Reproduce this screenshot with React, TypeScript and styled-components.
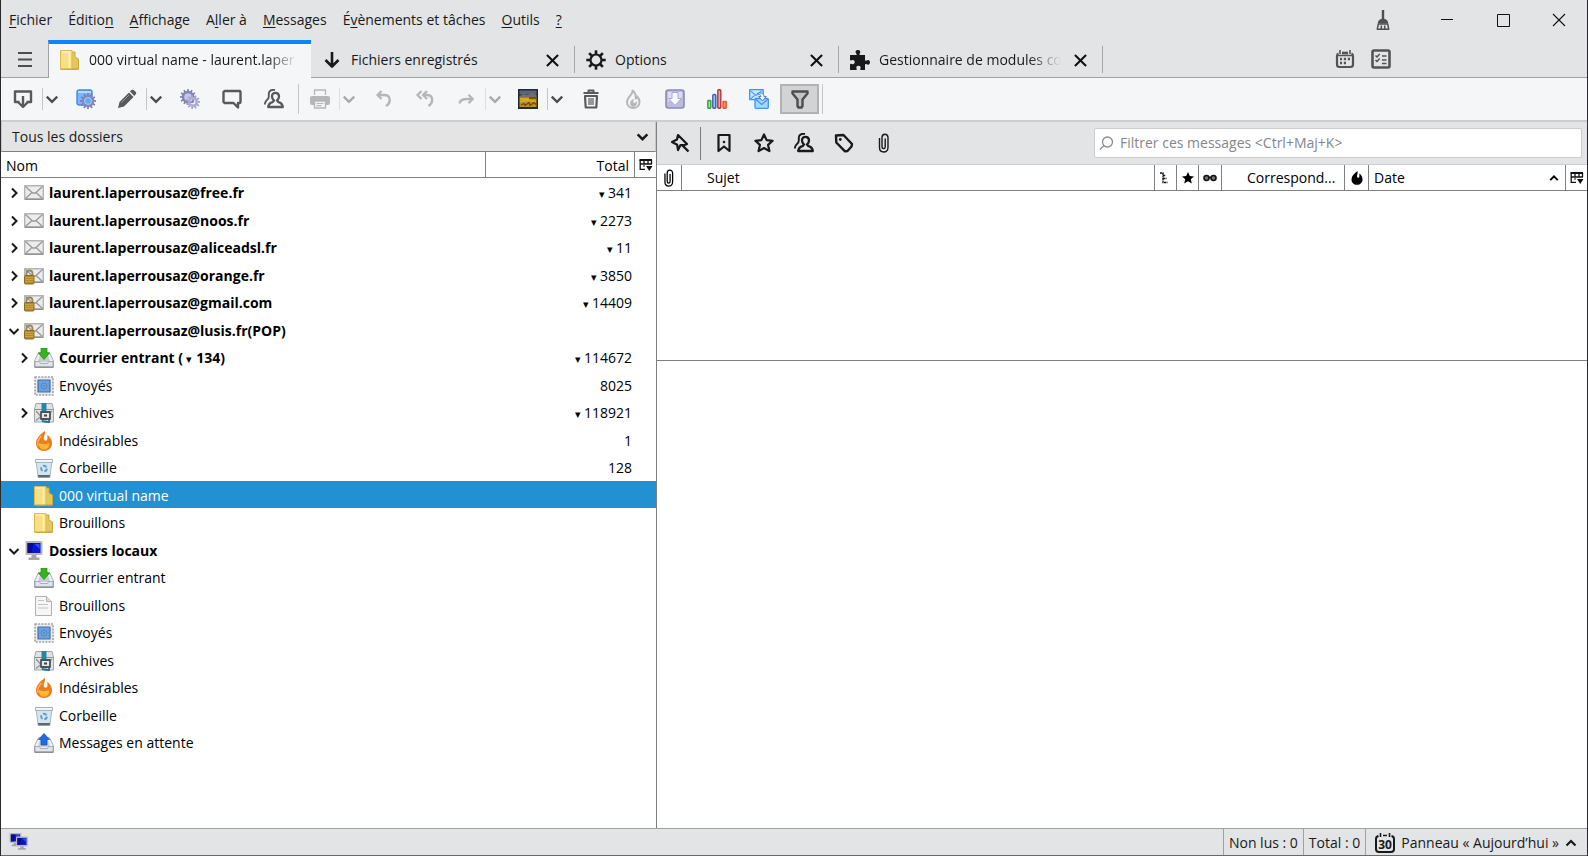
import React from "react";
import styled, { createGlobalStyle, css } from "styled-components";

const GlobalStyle = createGlobalStyle`
  *, *::before, *::after { box-sizing: border-box; }
  body { margin: 0; }
  body, button, input {
    font-family: "Open Sans", "Noto Sans", sans-serif;
    font-size: 14px;
    line-height: 20px;
    color: #18191a;
  }
  button { margin: 0; padding: 0; border: 0; background: none; }
  svg { display: block; flex: none; }
`;

/* ---------- window frame ---------- */

const Window = styled.div`
  display: flex;
  flex-direction: column;
  min-height: 100vh;
  overflow: hidden;
  background: #fff;
  border: solid #2a2a2e;
  border-width: 0 1px;
`;

const TitleBar = styled.header`
  display: flex;
  align-items: center;
  height: 40px;
  background: #e3e4e6;
`;

const MenuBar = styled.nav`
  display: flex;
  gap: 16px;
  padding-left: 8px;
`;

const MenuButton = styled.button`
  white-space: nowrap;
  text-underline-offset: 2px;
`;

const WindowControls = styled.div`
  display: flex;
  margin-left: auto;
`;

const WindowButton = styled.button<{ $wide?: boolean }>`
  display: flex;
  align-items: center;
  justify-content: center;
  width: ${(p) => (p.$wide ? 72 : 56)}px;
  height: 36px;
`;

/* ---------- tabs ---------- */

const TabBar = styled.div`
  display: flex;
  height: 38px;
  background: #e3e4e6;
  box-shadow: inset 0 -1px #a0a1a3;
`;

const AppMenuButton = styled.button`
  display: flex;
  align-items: center;
  justify-content: center;
  width: 47px;
`;

const TabItem = styled.div<{ $active?: boolean }>`
  display: flex;
  align-items: center;
  gap: 9px;
  position: relative;
  width: ${(p) => (p.$active ? 263 : 264)}px;
  padding: 2px 13px 0 11px;
  ${(p) =>
    p.$active
      ? css`
          background: #f5f6f7;
          border-top: 4px solid #0a84ff;
          border-left: 1px solid #a0a1a3;
          padding-top: 0;
          padding-bottom: 2px;
        `
      : css`
          &::after {
            content: "";
            position: absolute;
            right: 0;
            top: 6px;
            bottom: 5px;
            border-right: 1px solid #a6a7a9;
          }
        `}
`;

const TabLabel = styled.button<{ $fade?: boolean }>`
  flex: 1;
  min-width: 0;
  overflow: hidden;
  text-align: left;
  white-space: nowrap;
  ${(p) => p.$fade && css`mask-image: linear-gradient(to left, transparent, #000 32px);`}
`;

const CloseButton = styled.button`
  display: flex;
  justify-content: center;
  width: 20px;
`;

const TabTools = styled.div`
  display: flex;
  gap: 16px;
  align-items: center;
  margin-left: auto;
  padding-right: 196px;
`;

/* ---------- main toolbar ---------- */

const Toolbar = styled.div`
  display: flex;
  align-items: center;
  height: 44px;
  padding-left: 2px;
  background: #f5f6f7;
  border-bottom: 2px solid #cccdcf;
`;

const ToolButton = styled.button<{ $split?: boolean; $dim?: boolean }>`
  display: flex;
  align-items: center;
  justify-content: center;
  width: ${(p) => (p.$split ? 40 : 42)}px;
  height: 30px;
  color: #58595b;
  opacity: ${(p) => (p.$dim ? 0.4 : 1)};
`;

const DropButton = styled.button<{ $dim?: boolean }>`
  display: flex;
  align-items: center;
  width: 22px;
  height: 22px;
  margin-left: -1px;
  margin-right: 1px;
  padding-left: 2px;
  color: #4c4d4f;
  border-left: 1px solid #c4c5c7;
  opacity: ${(p) => (p.$dim ? 0.45 : 1)};
`;

const PressedButton = styled.button`
  display: flex;
  align-items: center;
  justify-content: center;
  width: 39px;
  height: 30px;
  margin-right: 3px;
  color: #4c4d4f;
  background: #d2d3d4;
  border: 2px solid #b1b2b4;
`;

const Divider = styled.span<{ $dark?: boolean }>`
  width: 1px;
  height: ${(p) => (p.$dark ? 33 : 30)}px;
  margin-right: ${(p) => (p.$dark ? 3 : 1)}px;
  background: ${(p) => (p.$dark ? "#7b7c7e" : "#c4c5c7")};
`;

const ToolGroup = styled.div`
  display: flex;
  align-items: center;
  padding-right: 3px;
`;

/* ---------- panes ---------- */

const Panes = styled.main`
  display: grid;
  grid-template-columns: 656px minmax(0, 1fr);
  flex: 1;
`;

const FolderPane = styled.section`
  border-right: 1px solid #7f8082;
`;

const FolderMode = styled.button`
  display: flex;
  align-items: center;
  justify-content: space-between;
  width: 100%;
  height: 30px;
  padding: 0 6px 0 10px;
  background: #e4e4e4;
  border: solid #c8c8c8;
  border-width: 0 1px 1px;
  border-bottom-color: #808080;
`;

const Table = styled.table`
  width: 100%;
  table-layout: fixed;
  border-collapse: separate;
  border-spacing: 0;
  color: #000;
`;

const HeadCell = styled.th<{ $pad?: string; $align?: string; $last?: boolean }>`
  height: 26px;
  padding: ${(p) => p.$pad || "0"};
  font-weight: 400;
  text-align: ${(p) => p.$align || "left"};
  white-space: nowrap;
  border-bottom: 1px solid #808080;
  border-right: ${(p) => (p.$last ? "0" : "1px solid #808080")};

  svg { margin: 0 auto; }
`;

const DateHead = styled.div`
  display: flex;
  align-items: center;
  justify-content: space-between;

  svg { margin: 0; }
`;

const FolderRow = styled.tr<{ $selected?: boolean }>`
  height: 28px;
  &:nth-child(even) { height: 27px; }
  ${(p) => p.$selected && css`background: #2391d1; color: #fff;`}
`;

const FolderCell = styled.td`
  padding: 0;
`;

const FolderLine = styled.div<{ $nested?: boolean; $bold?: boolean }>`
  display: flex;
  align-items: center;
  gap: 5px;
  height: 27px;
  padding-top: 2px;
  padding-left: ${(p) => (p.$nested ? 15 : 5)}px;
  font-weight: ${(p) => (p.$bold ? 700 : 400)};
  white-space: nowrap;
`;

const Twisty = styled.button`
  display: flex;
  align-items: center;
  justify-content: center;
  width: 16px;
  height: 20px;
  margin-right: -3px;
`;

const TwistySpace = styled.span`
  width: 13px;
`;

const CountCell = styled.td`
  padding: 2px 3px 0 0;
  text-align: right;
  white-space: nowrap;
`;

const Down = styled.span<{ $spaced?: boolean }>`
  margin: ${(p) => (p.$spaced ? "0 1px 0 3px" : "0")};
  font-family: "DejaVu Sans", sans-serif;
  font-size: 11px;
  line-height: 14px;
`;

const MessagePane = styled.section`
  display: flex;
  flex-direction: column;
`;

const FilterBar = styled.form`
  display: flex;
  align-items: center;
  height: 43px;
  padding: 0 5px 0 3px;
  background: #e3e4e6;
  border-bottom: 1px solid #cccdcf;
`;

const FilterButton = styled.button`
  display: flex;
  align-items: center;
  justify-content: center;
  width: 40px;
  height: 30px;
`;

const SearchBox = styled.label`
  display: flex;
  align-items: center;
  gap: 6px;
  flex: 0 1 488px;
  height: 30px;
  margin-left: auto;
  padding-left: 4px;
  background: #fff;
  border: 1px solid #cccdcf;
  border-radius: 2px;
`;

const SearchInput = styled.input`
  flex: 1;
  min-width: 0;
  padding: 0;
  border: 0;
  outline: 0;
  background: none;
  &::placeholder { color: #85868a; opacity: 1; }
`;

const ThreadArea = styled.div`
  height: 196px;
  border-bottom: 1px solid #7f8082;
`;

/* ---------- status bar ---------- */

const StatusBar = styled.footer`
  display: flex;
  height: 28px;
  background: #e3e4e6;
  border-top: 1px solid #9fa0a2;
  border-bottom: 1px solid #68696b;
`;

const OnlineButton = styled.button`
  padding: 0 8px;
  margin-right: auto;
`;

const StatusText = styled.span`
  padding: 4px 5px 2px;
  border-left: 1px solid #a0a1a3;
`;

const TodayButton = styled.button`
  display: flex;
  align-items: center;
  gap: 6px;
  padding: 1px 10px 0 9px;
  border-left: 1px solid #a0a1a3;
`;

/* ---------- icons ---------- */

const Chevron = ({ dir = "down", size = 12, w = 2 }: { dir?: "down" | "right" | "up"; size?: number; w?: number }) => (
  <svg width={size} height={size} viewBox="0 0 12 12" fill="none" stroke="currentColor" strokeWidth={w}>
    <path d={{ down: "M1.500 4l4.500 4.500L10.500 4", right: "M4 1.500L8.500 6 4 10.500", up: "M1.500 8.500L6 4l4.500 4.500" }[dir]} />
  </svg>
);

const Cross = ({ size, w }: { size: number; w: number }) => (
  <svg width={size} height={size} viewBox="0 0 14 14" stroke="#111" strokeWidth={w} fill="none">
    <path d="M1 1l12 12M13 1L1 13" />
  </svg>
);

const Icon = ({ children, size = 20 }: { children: React.ReactNode; size?: number }) => (
  <svg width={size} height={size} viewBox="0 0 20 20" fill="none" stroke="currentColor" strokeWidth="2" strokeLinejoin="round">
    {children}
  </svg>
);

const Broom = () => (
  <Icon>
    <path d="M10 0v9" stroke="#4e4f51" strokeWidth="2.400" />
    <path d="M4.800 13.500c0-3 2.200-4.800 5.200-4.800s5.200 1.800 5.200 4.800z" fill="#4e4f51" stroke="none" />
    <path d="M5.300 14L4.300 19.200h11.400L14.700 14zM8.300 15.500v4M11.700 15.500v4" stroke="#4e4f51" strokeWidth="1.500" />
  </Icon>
);

const gearTeeth = (cx: number, cy: number, r1: number, r2: number, n: number, color: string, w: number) =>
  Array.from({ length: n }, (_, i) => {
    const a = (i * 2 * Math.PI) / n;
    return (
      <line
        key={i}
        x1={cx + r1 * Math.cos(a)}
        y1={cy + r1 * Math.sin(a)}
        x2={cx + r2 * Math.cos(a)}
        y2={cy + r2 * Math.sin(a)}
        stroke={color}
        strokeWidth={w}
      />
    );
  });

const OptionsGear = () => (
  <Icon>
    <circle cx="10" cy="10" r="5.500" strokeWidth="2.200" />
    {gearTeeth(10, 10, 6, 9.700, 8, "currentColor", 2.600)}
  </Icon>
);

const Puzzle = () => (
  <Icon>
    <path
      d="M0 5h6c1 0 .8-1 .2-1.600C4.800 1.500 6 0 8 0s3 1.500 1.800 3.400C9.200 4.200 9.400 5 10.200 5H15v5c0 .8.800 1 1.500.5C18.300 9.300 20 10.300 20 12.300s-1.600 3-3.400 1.900c-.8-.5-1.600-.2-1.600.6V20h-4c-1 0-.9-1-.5-1.800.6-1.500-.4-2.400-2-2.400s-2.700.9-2 2.400c.4.900.4 1.800-.5 1.800H0v-5.500c0-.9 1-.9 1.700-.5 1.500.8 3-.1 3-1.900s-1.500-2.700-3-1.900C.9 10.600 0 10.500 0 9.700z"
      fill="currentColor"
      stroke="none"
    />
  </Icon>
);

const DownArrow = () => (
  <Icon>
    <path d="M10 2v14M3.500 10l6.500 6.500 6.500-6.500" strokeWidth="2.600" />
  </Icon>
);

const CalendarIcon = () => (
  <Icon>
    <path d="M3.500 4.500Q2 5 2 7v8.500Q2 18 4.500 18h11q2.500 0 2.500-2.500V7q0-2-1.500-2.500" stroke="#525355" strokeWidth="2.200" />
    <path d="M3 6.500h14" stroke="#525355" strokeWidth="1.500" />
    <path d="M5 1v4M15 1v4" stroke="#525355" strokeWidth="1.600" />
    <path d="M7 4h6" stroke="#525355" strokeWidth="2.600" />
    <path d="M8.800 10h2.200M12.800 10H15M5 10h2M5 14h2M8.800 14h2.200" stroke="#525355" strokeWidth="2.400" />
  </Icon>
);

const TasksIcon = () => (
  <Icon>
    <rect x="1.500" y="1.500" width="17" height="17" rx="1.500" stroke="#525355" strokeWidth="2.600" />
    <path d="M4.500 6.500L6 8l2.700-3M4.500 11L6 12.500 8.700 9.500M11 7h4.500M11 11h4.500M11 14.500h4.500" stroke="#525355" strokeWidth="1.500" />
  </Icon>
);

const PeopleIcon = () => (
  <Icon>
    <path d="M8.500 13.200l1.500-1.700C8.500 10.300 8 9 8 7.500c0-2.400 1.300-3.700 3.500-3.700S15 5.100 15 7.500c0 1.500-.5 2.800-2 4l1.500 1.700c2.600.7 4 2.300 4.300 4.800H4.200c.3-2.500 1.700-4.100 4.300-4.800z" strokeWidth="2.300" />
    <path d="M11 1C8 .3 5 1.500 4.800 4.500v3c0 1.700-.6 2.600-1.800 3.400C1.500 12 1 13.500 .8 15.500" strokeWidth="1.900" />
  </Icon>
);

const FolderIcon = () => (
  <Icon>
    <path d="M10 2h5v5l3.500 2v10H6z" fill="#e3c65c" stroke="#c9a83e" strokeWidth="1" />
    <path d="M.5 .500h11.500v18.500H.5z" fill="#f6df87" stroke="#dcbb4e" strokeWidth="1" />
    <path d="M2 2h7.500v16" stroke="#fdf3b8" strokeWidth="1.500" />
    <path d="M.5 19.300h18" stroke="#c79f38" strokeWidth="1" />
  </Icon>
);

const MailIcon = ({ lock }: { lock?: boolean }) => (
  <Icon>
    <rect x=".7" y="2.700" width="18.600" height="13.600" fill="#ececed" stroke="#b4b4b6" strokeWidth="1.400" />
    <path d="M1 16.200h18" stroke="#8e8e90" strokeWidth="1.400" />
    <path d="M1.500 3.500l7 6.500h3l7-6.500M1.500 15.500l6-5.500M18.500 15.500l-6-5.500" stroke="#98999b" strokeWidth="1.300" />
    {lock && (
      <>
        <path d="M2.500 10V7.500C2.500 3.500 8.500 3.500 8.500 7.500V10" stroke="#9b8659" strokeWidth="1.800" />
        <rect x=".5" y="9.500" width="9.500" height="8.500" rx="1" fill="#b18a2c" stroke="#8c6a1d" strokeWidth="1" />
        <path d="M1 11.500h8.500M1 13.500h8.500M1 15.500h8.500" stroke="#d0a94a" strokeWidth=".8" />
      </>
    )}
  </Icon>
);

const TrayIcon = ({ out }: { out?: boolean }) => (
  <Icon>
    <path d="M4.500 4.500h11L19.500 13v6H.5v-6z" fill="#eceff3" stroke="#a9adb2" strokeWidth="1" />
    <path d="M6 7h8l2 7H4z" fill="#c6ccd3" stroke="none" />
    <path d="M1 13.500h4.500l1 2h7l1-2H19V19H1z" fill="#dfe4ea" stroke="#9aa0a7" strokeWidth=".8" />
    <path d="M.5 19.200h19" stroke="#83888e" strokeWidth="1.200" />
    {out ? (
      <path d="M10 .500L15.500 6.500H13v5.500H7V6.500H4.500z" fill="#1f6bdf" stroke="#1450b4" strokeWidth=".7" />
    ) : (
      <path d="M7 0h6v5h2.700L10 11.500 4.300 5H7z" fill="#35b51c" stroke="#1f8b10" strokeWidth=".7" />
    )}
  </Icon>
);

const StampIcon = () => (
  <Icon>
    <rect x="1" y="1" width="18" height="18" fill="#ececec" stroke="#a0a1a2" strokeWidth="1.600" strokeDasharray="2 1.200" />
    <rect x="4" y="4" width="12" height="12" fill="#6ea0da" stroke="#3d70b5" strokeWidth="1.200" />
    <circle cx="10" cy="10" r="3" stroke="#5588ca" strokeWidth="1" />
    <circle cx="10" cy="10" r="1" fill="#5588ca" stroke="none" />
  </Icon>
);

const ArchiveIcon = () => (
  <Icon>
    <path d="M2 .500h16l1.500 5.500v13H.5V6z" fill="#e2e3e4" stroke="#a3a5a7" strokeWidth="1" />
    <path d="M1 6.500h18M2 8l5 5.500-5 4M18 8l-4 4" stroke="#8e9193" strokeWidth="1.200" />
    <path d="M7.500 0h5v18l-2-1.500-3 1z" fill="#2586a8" stroke="none" />
    <rect x="7" y="9" width="9" height="7" fill="#e8e8e8" stroke="#4d5358" strokeWidth="1.800" />
    <path d="M10 11.500h3v2h-3z" fill="#3d4347" stroke="none" />
    <path d="M8 18l7 1.500V17" stroke="#1f7596" strokeWidth="1.800" />
  </Icon>
);

const FireIcon = () => (
  <Icon>
    <path
      d="M11 0C7 2.500 2 7 2 12.500 2 17 5.500 20 10 20s8-3 8-7.500c0-3.500-1.500-6.500-4.500-8.500-.7 2 .8 4-.8 5.300-1.500 1-3-.2-3-2C9.700 5 11.700 3 11 0z"
      fill="#ee7c18"
      stroke="none"
    />
    <path d="M5 12c2 1.500 8 1.500 10 0 .5 4-1.500 6.500-5 6.500S4.500 16 5 12z" fill="#ffb938" stroke="none" />
    <path d="M7.500 5C4.500 8 3 11 4 15" stroke="#fbb468" strokeWidth="1.300" />
  </Icon>
);

const BinIcon = () => (
  <Icon>
    <path d="M2 2h16l-2 17H4z" fill="#d3e5ef" stroke="#a9bac5" strokeWidth="1" />
    <path d="M1.500 1.500h17v3h-17z" fill="#eef4f7" stroke="#a6b2ba" strokeWidth="1" />
    <path d="M4 17h12l-.4 2.500H4.400z" fill="#5c6870" stroke="none" />
    <circle cx="10" cy="10.500" r="2.800" stroke="#5f9cc9" strokeWidth="1.900" strokeDasharray="4 1.900" />
  </Icon>
);

const Monitor = ({ x, y, s }: { x: number; y: number; s: number }) => (
  <g transform={`translate(${x} ${y}) scale(${s})`} stroke="none">
    <rect x="0" y="0" width="17" height="14" rx="1" fill="#b8b9b6" />
    <rect x="2" y="2" width="13" height="10" fill="#0a16d0" />
    <path d="M2 2h6l-2 10H2z" fill="#0b0b92" />
    <path d="M9 3h5v5z" fill="#3550f0" />
    <path d="M6 14h5v2.500h3V19H3v-2.500h3z" fill="#a5a6a3" />
  </g>
);

const ComputerIcon = () => (
  <Icon>
    <Monitor x={1.500} y={0} s={1} />
  </Icon>
);

const PageIcon = () => (
  <Icon>
    <path d="M1.500 .500h11L17.500 5.500v14h-16z" fill="#f6f6f6" stroke="#aeb0b1" strokeWidth="1" />
    <path d="M12.500 .500v5h5" fill="#dcdddd" stroke="#aeb0b1" strokeWidth="1" />
    <path d="M4 4.500h6M4 8.500h10M4 12h10" stroke="#c3c4c5" strokeWidth="1" />
  </Icon>
);

const OnlineIcon = () => (
  <Icon>
    <Monitor x={0.500} y={1} s={0.700} />
    <Monitor x={7} y={4.500} s={0.700} />
  </Icon>
);

const PickerIcon = () => (
  <svg width="14" height="14" viewBox="0 0 14 14" fill="none" stroke="#111">
    <path d="M.5 2h12.500" strokeWidth="2" />
    <path d="M1.200 2v9.300H6M1 6h12M5 2v4M9 2v4M12.500 2v4" strokeWidth="1.300" />
    <path d="M5 7v2" strokeWidth="1" />
    <path d="M7 8h6.500L10.300 13z" fill="#111" stroke="none" />
  </svg>
);

const PaperClip = ({ size }: { size?: number }) => (
  <Icon size={size}>
    <path d="M5.500 5v9.500c0 6 8.500 6 8.500 0V4.500c0-4.300-6-4.300-6 0v9.300c0 2.400 3.200 2.400 3.200 0V5.500" strokeWidth="1.400" />
  </Icon>
);

/* ---------- toolbar drawings ---------- */

const GetMail = () => (
  <Icon>
    <path d="M6.500 13H2V2.500h16V13h-4.500" strokeWidth="2.400" />
    <path d="M10 7v11M5.500 13.500L10 18l4.500-4.500" strokeWidth="2.400" />
  </Icon>
);

const AddressGear = () => (
  <Icon>
    <rect x="1" y="1" width="15" height="15" rx="2" fill="#77b7fb" stroke="#3b8cf0" strokeWidth="1.400" />
    <path d="M2 3h13" stroke="#cfe5ff" strokeWidth="1.500" />
    {gearTeeth(12, 12, 5, 8, 12, "#7d80b0", 1.800)}
    <circle cx="12" cy="12" r="5" fill="#7dbafa" stroke="#8487b8" strokeWidth="2.400" />
    <circle cx="12" cy="12" r="3.400" fill="#63a6f5" stroke="#b6d6fb" strokeWidth=".8" />
  </Icon>
);

const Pencil = () => (
  <Icon>
    <path d="M1 19l1.500-6L12 3.500 16.500 8 7 17.500zM13 2.500l1.500-1.400c1-.8 1.900-.5 2.700.3l1.400 1.400c.8.800.9 1.700.1 2.500L17.400 7z" fill="currentColor" stroke="none" />
    <path d="M4.500 13.500l7.500-7.500" stroke="#9a9b9d" strokeWidth="1" />
  </Icon>
);

const TwoGears = () => (
  <Icon>
    {gearTeeth(8, 8, 5, 8, 12, "#7e80ae", 1.700)}
    <circle cx="8" cy="8" r="5" fill="#c5c6e0" stroke="#8284b2" strokeWidth="2.400" />
    {gearTeeth(13, 13, 4, 7, 11, "#a09fce", 1.700)}
    <circle cx="13" cy="13" r="3.700" fill="#eeeef8" stroke="#aeadd8" strokeWidth="2.600" />
    <path d="M13 10.500v2.500h-2.500" stroke="#6f7098" strokeWidth="1.500" />
  </Icon>
);

const Chat = () => (
  <Icon>
    <path d="M2.500 2h15.500l.5 1V13l-.5 1h-2v4.500L11.500 14H2.500l-1-1V3z" strokeWidth="2.400" />
  </Icon>
);

const Printer = () => (
  <Icon>
    <path d="M4.500 6V1h11v5" strokeWidth="1.300" />
    <rect x="0" y="7" width="20" height="9" rx="2" fill="currentColor" stroke="none" />
    <path d="M4.500 12h11v7h-11z" fill="#f5f6f7" strokeWidth="1.300" />
    <path d="M6.500 14.500h7M6.500 16.700h5" strokeWidth="1.200" />
  </Icon>
);

const Reply = ({ all }: { all?: boolean }) => (
  <Icon>
    {all ? (
      <path d="M6.500 2L2.500 6l4 4M12 2L8 6l4 4M8.500 6H12c6 0 7 7 1.500 11" strokeWidth="2.400" />
    ) : (
      <path d="M8.500 2L4.500 6l4 4M5 6h6c7 0 7.500 7.500 2 11" strokeWidth="2.400" />
    )}
  </Icon>
);

const Forward = () => (
  <Icon>
    <path d="M3.500 14.500C4 11 7 10 11 10h5M12.500 5.800L16.800 10l-4.300 4.200" strokeWidth="2.300" />
  </Icon>
);

const Picture = () => (
  <Icon>
    <rect x="0" y="0" width="20" height="20" fill="#242634" stroke="none" />
    <rect x="1.500" y="1.500" width="17" height="4" fill="#5c6580" stroke="none" />
    <path d="M1.500 7l4-2 4 1 5-2 4 2v3h-17z" fill="#75705f" stroke="none" />
    <rect x="1.500" y="8.500" width="17" height="9.500" fill="#c08f18" stroke="none" />
    <path d="M2 10h9M2 12.500c5-1 11-1 16 0" stroke="#e0b030" strokeWidth="1.300" />
    <path d="M3 16l3-1.500 1 2 4-3 1 3 4-3 2 2" stroke="#6a4c10" strokeWidth="1.300" />
    <path d="M11 9h7" stroke="#4e4118" strokeWidth="1.300" />
  </Icon>
);

const Trash = () => (
  <Icon>
    <path d="M2.500 4h15M7.500 3.500V1.500h5v2" />
    <path d="M4 7h12l-.7 11.500H4.700z" strokeWidth="2.200" />
    <path d="M8 9v7M10 9v7M12 9v7" strokeWidth="1.200" />
  </Icon>
);

const Flame = () => (
  <Icon>
    <path
      d="M9.500 1.500C10.500 5.500 4 7.500 4 13c0 3.600 2.600 6 6.200 6s6.300-2.400 6.300-6c0-2.300-.8-4-2.300-5.500-.2 1-.7 1.700-1.500 2 .4-3-.6-6-3.200-8z"
      strokeWidth="2"
    />
    <path d="M8 12c-1.500 3-.3 5.500 2.200 5.500s4-2 3.200-5c-1.200 1.800-2.200 2-2.900 1.500-.8-.6-.5-2 .2-3.500-1.200.3-2 .7-2.700 1.500z" fill="currentColor" strokeWidth=".6" />
  </Icon>
);

const DownloadBox = () => (
  <Icon>
    <rect x="1" y="1" width="18" height="18" rx="2.500" fill="#bdbce0" stroke="#8b8ab5" strokeWidth="1.600" />
    <path d="M3 3h14v6c-5-1-10 1-14 4z" fill="#dcdcf2" stroke="none" />
    <path d="M7 3.500h6v6h3.500L10 16.500 3.500 9.500H7z" fill="#f7f7fe" stroke="#aaa9cd" strokeWidth="1" />
  </Icon>
);

const Chart = () => (
  <Icon>
    <rect x=".8" y="11.500" width="3" height="7.700" rx=".6" fill="#a5dfa0" stroke="#33a33a" strokeWidth="1.400" />
    <rect x="5.800" y="5.500" width="3" height="13.700" rx="1" fill="#a9bfea" stroke="#3c5fae" strokeWidth="1.400" />
    <rect x="10.800" y=".8" width="3" height="18.400" rx="1" fill="#e2a7ac" stroke="#b3343f" strokeWidth="1.400" />
    <rect x="16" y="12.500" width="3.200" height="6.700" rx=".6" fill="#ff8d63" stroke="#ee5427" strokeWidth="1.400" />
  </Icon>
);

const Envelopes = () => (
  <Icon>
    <rect x=".7" y=".7" width="13.500" height="10" fill="#cbe6ff" stroke="#3b97f2" strokeWidth="1.300" />
    <path d="M1 1.500l6 5 6-5M1 10.500l4.500-4" stroke="#4fa3f5" strokeWidth="1.100" />
    <rect x="6" y="9.500" width="13.300" height="9.800" rx="1" fill="#a9d6ff" stroke="#3b97f2" strokeWidth="1.300" />
    <path d="M6.500 10l6.200 5.500L19 10" stroke="#3b97f2" strokeWidth="1.200" />
    <path d="M8 4.500c4-1.500 7 0 7 3h2.200L13.500 12 9.800 7.500H12c0-1.500-2-2.500-4-3z" fill="#e9f5ff" stroke="#4a86b8" strokeWidth="1" />
  </Icon>
);

const Funnel = () => (
  <Icon>
    <path d="M2.500 2.500h15v2l-5 6V17l-1 1.500h-3L7.500 17v-6.500l-5-6z" fill="#c3c4c6" strokeWidth="2.400" />
  </Icon>
);

/* ---------- data ---------- */

type Kind = "mail" | "lock" | "inbox" | "sent" | "archive" | "junk" | "trash" | "folder" | "local" | "page" | "outbox";

interface Folder {
  name: string;
  kind: Kind;
  top?: boolean;
  bold?: boolean;
  open?: boolean;
  closed?: boolean;
  total?: string;
  sub?: boolean;
  unread?: string;
  selected?: boolean;
}

const folders: Folder[] = [
  { name: "laurent.laperrousaz@free.fr", kind: "mail", top: true, closed: true, total: "341", sub: true },
  { name: "laurent.laperrousaz@noos.fr", kind: "mail", top: true, closed: true, total: "2273", sub: true },
  { name: "laurent.laperrousaz@aliceadsl.fr", kind: "mail", top: true, closed: true, total: "11", sub: true },
  { name: "laurent.laperrousaz@orange.fr", kind: "lock", top: true, closed: true, total: "3850", sub: true },
  { name: "laurent.laperrousaz@gmail.com", kind: "lock", top: true, closed: true, total: "14409", sub: true },
  { name: "laurent.laperrousaz@lusis.fr(POP)", kind: "lock", top: true, open: true },
  { name: "Courrier entrant", kind: "inbox", bold: true, closed: true, total: "114672", sub: true, unread: "134" },
  { name: "Envoyés", kind: "sent", total: "8025" },
  { name: "Archives", kind: "archive", closed: true, total: "118921", sub: true },
  { name: "Indésirables", kind: "junk", total: "1" },
  { name: "Corbeille", kind: "trash", total: "128" },
  { name: "000 virtual name", kind: "folder", selected: true },
  { name: "Brouillons", kind: "folder" },
  { name: "Dossiers locaux", kind: "local", top: true, open: true },
  { name: "Courrier entrant", kind: "inbox" },
  { name: "Brouillons", kind: "page" },
  { name: "Envoyés", kind: "sent" },
  { name: "Archives", kind: "archive" },
  { name: "Indésirables", kind: "junk" },
  { name: "Corbeille", kind: "trash" },
  { name: "Messages en attente", kind: "outbox" },
];

const kindIcon: Record<Kind, React.ReactNode> = {
  mail: <MailIcon />,
  lock: <MailIcon lock />,
  inbox: <TrayIcon />,
  sent: <StampIcon />,
  archive: <ArchiveIcon />,
  junk: <FireIcon />,
  trash: <BinIcon />,
  folder: <FolderIcon />,
  local: <ComputerIcon />,
  page: <PageIcon />,
  outbox: <TrayIcon out />,
};

/* Each menu is split around its access key. */
const menus: [string, string, string][] = [
  ["", "F", "ichier"],
  ["Éditio", "n", ""],
  ["", "A", "ffichage"],
  ["A", "l", "ler à"],
  ["", "M", "essages"],
  ["É", "v", "ènements et tâches"],
  ["", "O", "utils"],
  ["", "?", ""],
];

const Tool = ({ label, icon, drop, dim }: { label: string; icon: React.ReactNode; drop?: boolean; dim?: boolean }) => (
  <>
    <ToolButton aria-label={label} $split={drop} $dim={dim} disabled={dim}>
      {icon}
    </ToolButton>
    {drop && (
      <DropButton aria-label={`${label}, plus`} $dim={dim} disabled={dim}>
        <Chevron size={14} />
      </DropButton>
    )}
  </>
);

const FolderItem = ({ f }: { f: Folder }) => (
  <FolderRow $selected={f.selected}>
    <FolderCell>
      <FolderLine $nested={!f.top} $bold={f.top || f.bold}>
        {f.open || f.closed ? (
          <Twisty aria-label={f.open ? "Réduire" : "Développer"}>
            <Chevron dir={f.open ? "down" : "right"} size={12} />
          </Twisty>
        ) : (
          <TwistySpace />
        )}
        {kindIcon[f.kind]}
        <span>
          {f.name}
          {f.unread && (
            <>
              {" ("}
              <Down $spaced>▾</Down> {f.unread})
            </>
          )}
        </span>
      </FolderLine>
    </FolderCell>
    <CountCell>
      {f.sub && <Down>▾ </Down>}
      {f.total}
    </CountCell>
    <td />
  </FolderRow>
);

export default function App() {
  return (
    <>
      <GlobalStyle />
      <Window>
        <TitleBar>
          <MenuBar>
            {menus.map(([a, key, b]) => (
              <MenuButton key={a + key + b}>
                {a}
                <u>{key}</u>
                {b}
              </MenuButton>
            ))}
          </MenuBar>
          <WindowControls>
            <WindowButton $wide aria-label="Nettoyer">
              <Broom />
            </WindowButton>
            <WindowButton aria-label="Réduire la fenêtre">
              <svg width="12" height="13" viewBox="0 0 12 13" stroke="#111">
                <path d="M0 5.500h12" />
              </svg>
            </WindowButton>
            <WindowButton aria-label="Agrandir">
              <svg width="13" height="13" viewBox="0 0 13 13" stroke="#111" fill="none">
                <path d="M.500 .500h12v12H.500z" />
              </svg>
            </WindowButton>
            <WindowButton aria-label="Fermer">
              <Cross size={14} w={1.1} />
            </WindowButton>
          </WindowControls>
        </TitleBar>

        <TabBar>
          <AppMenuButton aria-label="Menu de l’application">
            <svg width="16" height="16" viewBox="0 0 16 16" stroke="#4c4d4f" strokeWidth="2">
              <path d="M1 2h14M1 8.500h14M1 15h14" />
            </svg>
          </AppMenuButton>
          <TabItem $active>
            <FolderIcon />
            <TabLabel $fade>000 virtual name - laurent.laper</TabLabel>
          </TabItem>
          <TabItem>
            <DownArrow />
            <TabLabel>Fichiers enregistrés</TabLabel>
            <CloseButton aria-label="Fermer l’onglet">
              <Cross size={13} w={2.2} />
            </CloseButton>
          </TabItem>
          <TabItem>
            <OptionsGear />
            <TabLabel>Options</TabLabel>
            <CloseButton aria-label="Fermer l’onglet">
              <Cross size={13} w={2.2} />
            </CloseButton>
          </TabItem>
          <TabItem>
            <Puzzle />
            <TabLabel $fade>Gestionnaire de modules co</TabLabel>
            <CloseButton aria-label="Fermer l’onglet">
              <Cross size={13} w={2.2} />
            </CloseButton>
          </TabItem>
          <TabTools>
            <button aria-label="Agenda">
              <CalendarIcon />
            </button>
            <button aria-label="Tâches">
              <TasksIcon />
            </button>
          </TabTools>
        </TabBar>

        <Toolbar>
          <ToolGroup>
            <Tool label="Relever" icon={<GetMail />} drop />
            <Tool label="Adresses" icon={<AddressGear />} />
            <Tool label="Écrire" icon={<Pencil />} drop />
            <Tool label="Réglages" icon={<TwoGears />} />
            <Tool label="Discussion" icon={<Chat />} />
            <Tool label="Contacts" icon={<PeopleIcon />} />
          </ToolGroup>
          <Divider />
          <Tool label="Imprimer" icon={<Printer />} drop dim />
          <Tool label="Répondre" icon={<Reply />} dim />
          <Tool label="Répondre à tous" icon={<Reply all />} dim />
          <Tool label="Transférer" icon={<Forward />} drop dim />
          <Tool label="Thème" icon={<Picture />} drop />
          <Tool label="Supprimer" icon={<Trash />} />
          <Tool label="Indésirable" icon={<Flame />} dim />
          <Tool label="Importer" icon={<DownloadBox />} />
          <Tool label="Statistiques" icon={<Chart />} />
          <Tool label="Rediriger" icon={<Envelopes />} />
          <PressedButton aria-label="Filtre rapide" aria-pressed="true">
            <Funnel />
          </PressedButton>
          <Divider />
        </Toolbar>

        <Panes>
          <FolderPane>
            <FolderMode>
              Tous les dossiers
              <Chevron size={13} w={2.2} />
            </FolderMode>
            <Table>
              <colgroup>
                <col />
                <col width="149" />
                <col width="21" />
              </colgroup>
              <thead>
                <tr>
                  <HeadCell $pad="2px 5px 0">Nom</HeadCell>
                  <HeadCell $pad="2px 5px 0" $align="right">
                    Total
                  </HeadCell>
                  <HeadCell $last>
                    <PickerIcon />
                  </HeadCell>
                </tr>
              </thead>
              <tbody>
                {folders.map((f, i) => (
                  <FolderItem key={i} f={f} />
                ))}
              </tbody>
            </Table>
          </FolderPane>

          <MessagePane>
            <FilterBar>
              <FilterButton type="button" aria-label="Épingler">
                <Icon>
                  <path d="M8 2l9 9-3 1.200-3.500-.2-2.500 5-.8-5.200L2 9l5-2.500z" strokeWidth="2.200" />
                  <path d="M12.500 12.500L18.500 18.500" strokeWidth="2.400" />
                </Icon>
              </FilterButton>
              <Divider $dark />
              <FilterButton type="button" aria-label="Non lus">
                <Icon>
                  <path d="M4.500 2h11v16L10 13.500 4.500 18z" strokeWidth="2.200" />
                  <circle cx="10" cy="9" r="1.300" fill="currentColor" stroke="none" />
                </Icon>
              </FilterButton>
              <FilterButton type="button" aria-label="Suivis">
                <Icon>
                  <path d="M10 1.500l2.600 5.600 6 .7-4.500 4.100 1.300 6.200L10 15l-5.400 3.100 1.300-6.200L1.400 7.800l6-.7z" strokeWidth="2.200" />
                </Icon>
              </FilterButton>
              <FilterButton type="button" aria-label="Contact">
                <PeopleIcon />
              </FilterButton>
              <FilterButton type="button" aria-label="Étiquettes">
                <Icon>
                  <path d="M2 2.500L9.500 2 18 11l-.5 2.500-4 4.500-2.500.3L2.300 9.500z" strokeWidth="2.400" />
                  <circle cx="6.300" cy="6.500" r="1.400" fill="currentColor" stroke="none" />
                </Icon>
              </FilterButton>
              <FilterButton type="button" aria-label="Pièces jointes">
                <PaperClip />
              </FilterButton>
              <SearchBox>
                <svg width="15" height="15" viewBox="0 0 15 15" fill="none" stroke="#8a8b8d" strokeWidth="1.300">
                  <circle cx="8.500" cy="6" r="5" />
                  <path d="M5 9.500L1 13.500" />
                </svg>
                <SearchInput type="text" aria-label="Filtrer ces messages" placeholder="Filtrer ces messages <Ctrl+Maj+K>" />
              </SearchBox>
            </FilterBar>
            <ThreadArea>
              <Table>
                <colgroup>
                  <col width="25" />
                  <col />
                  <col width="22" />
                  <col width="22" />
                  <col width="23" />
                  <col width="123" />
                  <col width="24" />
                  <col width="197" />
                  <col width="21" />
                </colgroup>
                <thead>
                  <tr>
                    <HeadCell>
                      <PaperClip size={18} />
                    </HeadCell>
                    <HeadCell $pad="0 0 0 25px">Sujet</HeadCell>
                    <HeadCell>
                      <svg width="12" height="12" viewBox="0 0 12 12" fill="none" stroke="#111" strokeWidth="1.300">
                        <path d="M0 1h3v9.500h4.500M3 3.500h2.500M3 6.500h3.500" strokeDasharray="2.200 .5" />
                      </svg>
                    </HeadCell>
                    <HeadCell>
                      <svg width="12" height="12" viewBox="0 0 12 12" fill="#000">
                        <path d="M6 0l1.800 4 4.200.400-3.200 2.800 1 4.300L6 9.200l-3.800 2.300 1-4.300L0 4.400 4.200 4z" />
                      </svg>
                    </HeadCell>
                    <HeadCell>
                      <svg width="14" height="8" viewBox="0 0 14 8" fill="#777" stroke="#111" strokeWidth="1.600">
                        <circle cx="3.500" cy="4" r="2.500" />
                        <circle cx="10.500" cy="4" r="2.500" />
                        <path d="M6 3.500h2" />
                      </svg>
                    </HeadCell>
                    <HeadCell $pad="0 0 0 25px">Correspond...</HeadCell>
                    <HeadCell>
                      <svg width="12" height="14" viewBox="0 0 12 14" fill="#000">
                        <path d="M6.500 0C3 2.500.5 5 .5 8.500c0 3.200 2.300 5.300 5.500 5.300s5.500-2.100 5.500-5.300c0-2.500-1-4.500-3-6-.5 1.500.5 3-.5 4-1 .6-2 0-2-1.300C6 3.500 7 2 6.500 0z" />
                      </svg>
                    </HeadCell>
                    <HeadCell $pad="0 6px 0 5px">
                      <DateHead>
                        Date
                        <Chevron dir="up" size={10} w={2.4} />
                      </DateHead>
                    </HeadCell>
                    <HeadCell $last>
                      <PickerIcon />
                    </HeadCell>
                  </tr>
                </thead>
              </Table>
            </ThreadArea>
          </MessagePane>
        </Panes>

        <StatusBar>
          <OnlineButton aria-label="En ligne">
            <OnlineIcon />
          </OnlineButton>
          <StatusText>Non lus : 0</StatusText>
          <StatusText>Total : 0</StatusText>
          <TodayButton>
            <svg width="20" height="20" viewBox="0 0 20 20" fill="none" stroke="#18191a">
              <path d="M3.500 3Q1 3.500 1 6v10q0 3 3 3h12q3 0 3-3V6q0-2.500-2.500-3" strokeWidth="2" />
              <path d="M5.500 0v4M14.500 0v4M8 2.500h4" strokeWidth="1.600" />
              <text x="10" y="16" textAnchor="middle" fontSize="12" fontWeight="700" fill="#18191a" stroke="none">
                30
              </text>
            </svg>
            Panneau « Aujourd’hui »
            <Chevron dir="up" w={2.2} />
          </TodayButton>
        </StatusBar>
      </Window>
    </>
  );
}
